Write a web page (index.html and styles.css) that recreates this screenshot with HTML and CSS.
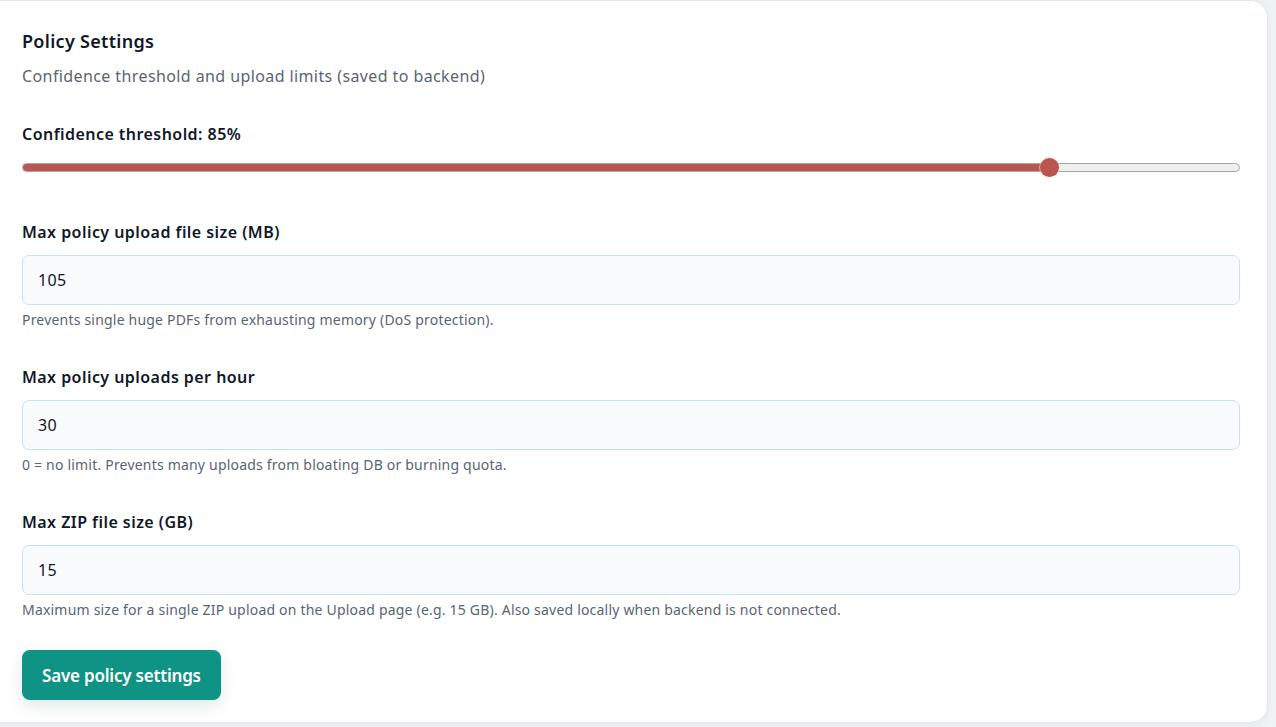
FILE: index.html
```html
<!DOCTYPE html>
<html lang="en">
<head>
<meta charset="utf-8">
<title>Policy Settings</title>
<link rel="stylesheet" href="styles.css">
</head>
<body>
<main class="page">
  <section class="card">
    <header class="card-head">
      <h2 class="card-title">Policy Settings</h2>
      <p class="card-sub">Confidence threshold and upload limits (saved to backend)</p>
    </header>

    <div class="field field-range">
      <label class="field-label" for="threshold">Confidence threshold: 85%</label>
      <input class="range" id="threshold" type="range" min="0" max="100" value="85" style="--value: 0.85">
    </div>

    <div class="field">
      <label class="field-label" for="maxSize">Max policy upload file size (MB)</label>
      <input class="text-input" id="maxSize" type="text" value="105">
      <p class="hint">Prevents single huge PDFs from exhausting memory (DoS protection).</p>
    </div>

    <div class="field">
      <label class="field-label" for="perHour">Max policy uploads per hour</label>
      <input class="text-input" id="perHour" type="text" value="30">
      <p class="hint">0 = no limit. Prevents many uploads from bloating DB or burning quota.</p>
    </div>

    <div class="field">
      <label class="field-label" for="zipSize">Max ZIP file size (GB)</label>
      <input class="text-input" id="zipSize" type="text" value="15">
      <p class="hint">Maximum size for a single ZIP upload on the Upload page (e.g. 15 GB). Also saved locally when backend is not connected.</p>
    </div>

    <div class="actions">
      <button class="btn-primary" type="button">Save policy settings</button>
    </div>
  </section>
</main>
</body>
</html>
```

FILE: styles.css
```css
* { box-sizing: border-box; }

html, body {
  margin: 0;
  height: 100%;
}

body {
  background: #eef3f6;
  font-family: "Noto Sans", "Open Sans", sans-serif;
  color: #111827;
  overflow: hidden;
}

.page {
  padding: 0 8px 5px 0;
}

.card {
  margin-left: -24px;
  background: #ffffff;
  border: 1px solid #e3e8ec;
  border-radius: 18px;
  box-shadow: 0 2px 8px rgba(15, 40, 60, 0.05);
  padding: 26px 27px 22px 45px;
  display: flex;
  flex-direction: column;
}

.card-head {
  display: flex;
  flex-direction: column;
  gap: 9px;
}

.card-title {
  margin: 0;
  font-size: 18px;
  line-height: 28px;
  font-weight: 600;
  letter-spacing: 0.3px;
  color: #111827;
}

.card-sub {
  margin: 0;
  font-size: 16px;
  line-height: 24px;
  letter-spacing: 0.4px;
  color: #5b6472;
}

.field {
  display: flex;
  flex-direction: column;
  margin-top: 35px;
}

.field-range {
  margin-top: 34px;
  gap: 11px;
}

.field-range + .field {
  margin-top: 43px;
}

.field-label {
  font-size: 16px;
  line-height: 24px;
  font-weight: 600;
  letter-spacing: 0.45px;
  color: #111827;
}

/* range slider: filled part up to the thumb centre */
.range {
  -webkit-appearance: none;
  appearance: none;
  width: 100%;
  height: 20px;
  margin: 0;
  background: transparent;
  --thumb: 19px;
}

.range::-webkit-slider-runnable-track {
  height: 9px;
  border: 1px solid #a6a6a6;
  border-radius: 5px;
  background:
    linear-gradient(#b8564f, #b8564f) 0 0 / calc(var(--thumb) / 2 + (100% - var(--thumb)) * var(--value)) 100% no-repeat,
    #efefef;
}

.range::-webkit-slider-thumb {
  -webkit-appearance: none;
  appearance: none;
  width: var(--thumb);
  height: var(--thumb);
  margin-top: -6px;
  border-radius: 50%;
  background: #b8564f;
  box-shadow: 0 0 0 1px rgba(255, 220, 210, 0.6);
  border: none;
}

.text-input {
  margin-top: 11px;
  height: 50px;
  width: 100%;
  padding: 0 15px;
  font: inherit;
  font-size: 16px;
  letter-spacing: 0.3px;
  color: #111827;
  background: #f8fafc;
  border: 1px solid #c5e4ee;
  border-radius: 7px;
  outline: none;
}

.hint {
  margin: 5px 0 0;
  font-size: 14px;
  line-height: 20px;
  letter-spacing: 0.2px;
  color: #5b6472;
}

.actions {
  margin-top: 30px;
  display: flex;
}

.btn-primary {
  height: 50px;
  padding: 0 20px;
  font: inherit;
  font-size: 17px;
  font-weight: 600;
  letter-spacing: -0.2px;
  color: #ffffff;
  background: #0e9384;
  border: none;
  border-radius: 8px;
  box-shadow: 0 6px 16px rgba(15, 60, 70, 0.12);
  cursor: pointer;
}
```
